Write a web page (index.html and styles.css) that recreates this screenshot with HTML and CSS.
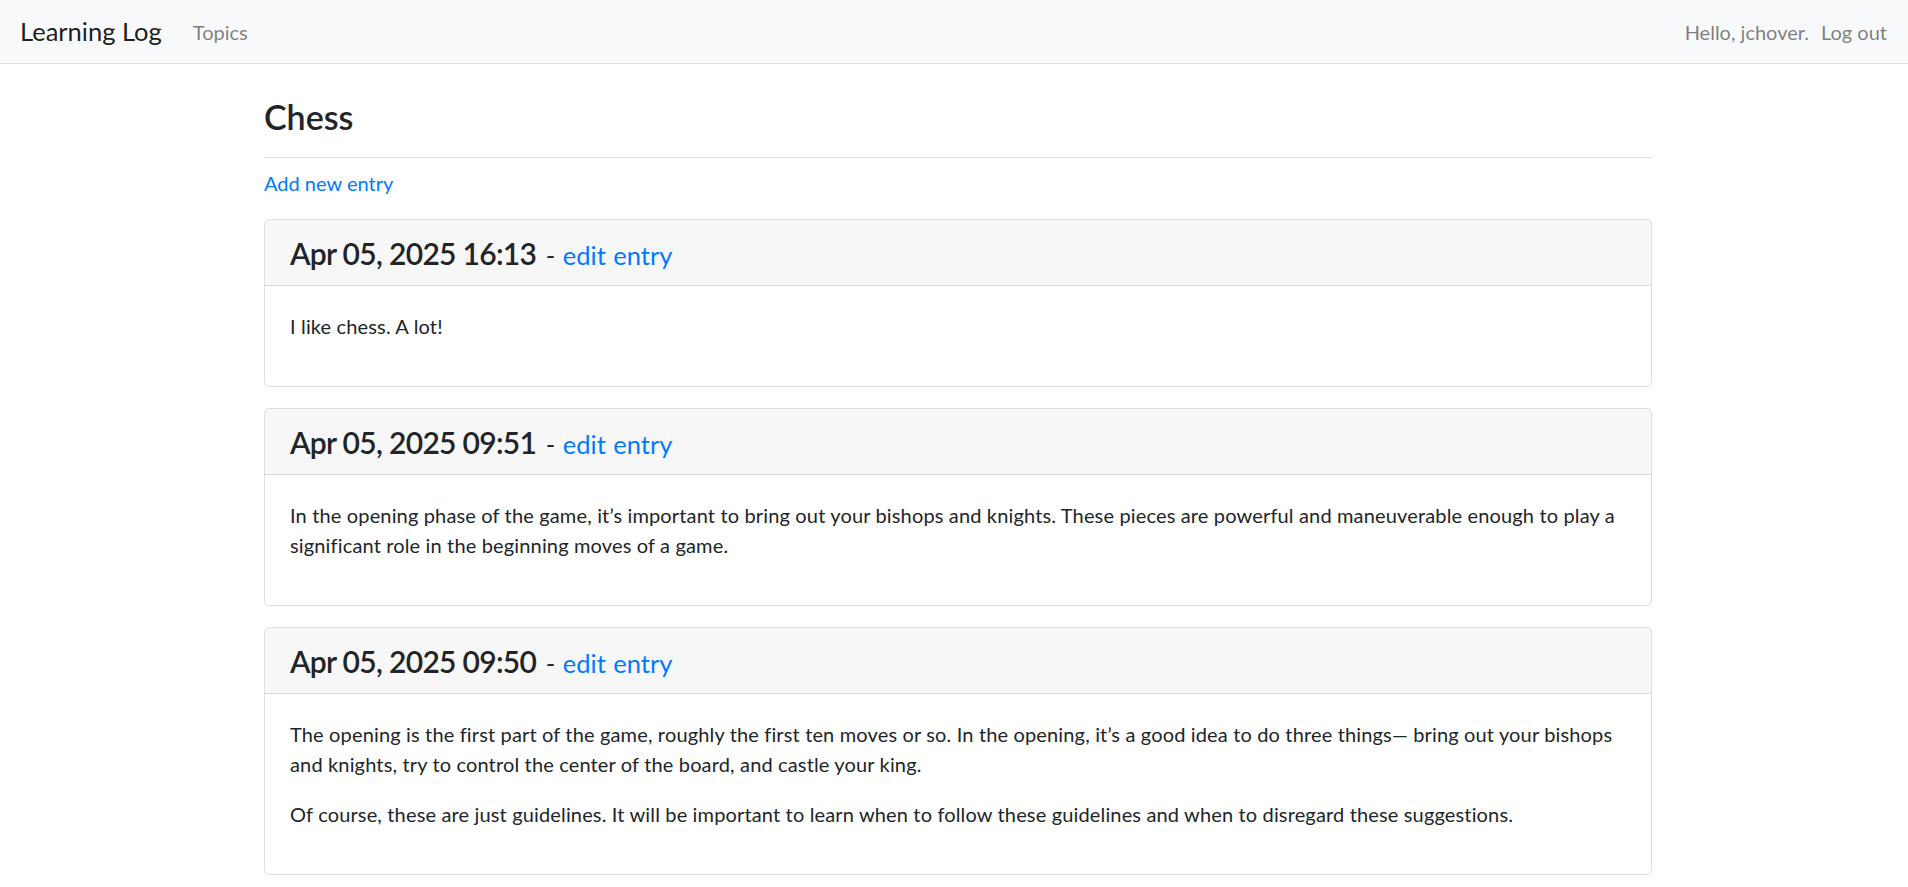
FILE: index.html
```html
<!DOCTYPE html>
<html lang="en">
<head>
<meta charset="utf-8">
<title>Learning Log</title>
<link rel="stylesheet" href="styles.css">
</head>
<body>
<nav class="navbar">
  <a class="brand" href="#">Learning Log</a>
  <a class="nav-link" href="#">Topics</a>
  <div class="nav-right">
    <span class="navbar-text">Hello, jchover.</span>
    <a class="nav-link nav-link-last" href="#">Log out</a>
  </div>
</nav>
<main class="container">
  <div class="page-header"><h2>Chess</h2></div>
  <p class="add-link"><a href="#">Add new entry</a></p>

  <div class="card">
    <h4 class="card-header"><span class="date">Apr 05, 2025 16:13</span> <small>- <a href="#">edit entry</a></small></h4>
    <div class="card-body">
      <p>I like chess. A lot!</p>
    </div>
  </div>

  <div class="card">
    <h4 class="card-header"><span class="date">Apr 05, 2025 09:51</span> <small>- <a href="#">edit entry</a></small></h4>
    <div class="card-body">
      <p>In the opening phase of the game, it’s important to bring out your bishops and knights. These pieces are powerful and maneuverable enough to play a significant role in the beginning moves of a game.</p>
    </div>
  </div>

  <div class="card">
    <h4 class="card-header"><span class="date">Apr 05, 2025 09:50</span> <small>- <a href="#">edit entry</a></small></h4>
    <div class="card-body">
      <p>The opening is the first part of the game, roughly the first ten moves or so. In the opening, it’s a good idea to do three things— bring out your bishops and knights, try to control the center of the board, and castle your king.</p>
      <p>Of course, these are just guidelines. It will be important to learn when to follow these guidelines and when to disregard these suggestions.</p>
    </div>
  </div>
</main>
</body>
</html>
```

FILE: styles.css
```css
* { box-sizing: border-box; }

body {
  margin: 0;
  font-family: Lato, "Segoe UI", sans-serif;
  font-size: 20px;
  line-height: 1.5;
  color: #212529;
  background: #fff;
}

a { color: #007bff; text-decoration: none; }

.navbar {
  display: flex;
  align-items: center;
  height: 64px;
  padding: 0 20px;
  background: #f8f9fa;
  border-bottom: 1px solid #dee2e6;
}

.brand {
  font-size: 25.5px;
  color: rgba(0, 0, 0, .9);
  margin-right: 21px;
}

.nav-link {
  color: rgba(0, 0, 0, .5);
  padding: 0 10px;
}

.nav-right {
  margin-left: auto;
  display: flex;
  align-items: center;
}

.navbar-text { color: rgba(0, 0, 0, .5); }

.nav-link-last { padding: 0 1px 0 12px; }

.container {
  width: 1388px;
  margin-left: calc(50% - 690px);
  padding-top: 32px;
}

.page-header {
  border-bottom: 1px solid #dee2e6;
  padding-bottom: 20px;
}

h2 {
  margin: 0;
  font-size: 34px;
  line-height: 41px;
  font-weight: 600;
}

.add-link { margin: 10px 0 21px; }

.card {
  border: 1px solid rgba(0, 0, 0, .125);
  border-radius: 5px;
  margin-bottom: 21px;
  overflow: hidden;
}

.card-header {
  margin: 0;
  background: rgba(0, 0, 0, .03);
  border-bottom: 1px solid rgba(0, 0, 0, .125);
  padding: 15px 25px 14px;
  font-size: 30px;
  line-height: 36px;
  font-weight: 600;
}

.card-header .date { letter-spacing: -0.7px; }

.card-header small {
  margin-left: 2px;
  font-size: 25.5px;
  line-height: 1;
  font-weight: 400;
  word-spacing: 1px;
}

.card-body {
  padding: 25px;
  letter-spacing: 0.15px;
}

.card-body p { margin: 0 0 20px; }
```
